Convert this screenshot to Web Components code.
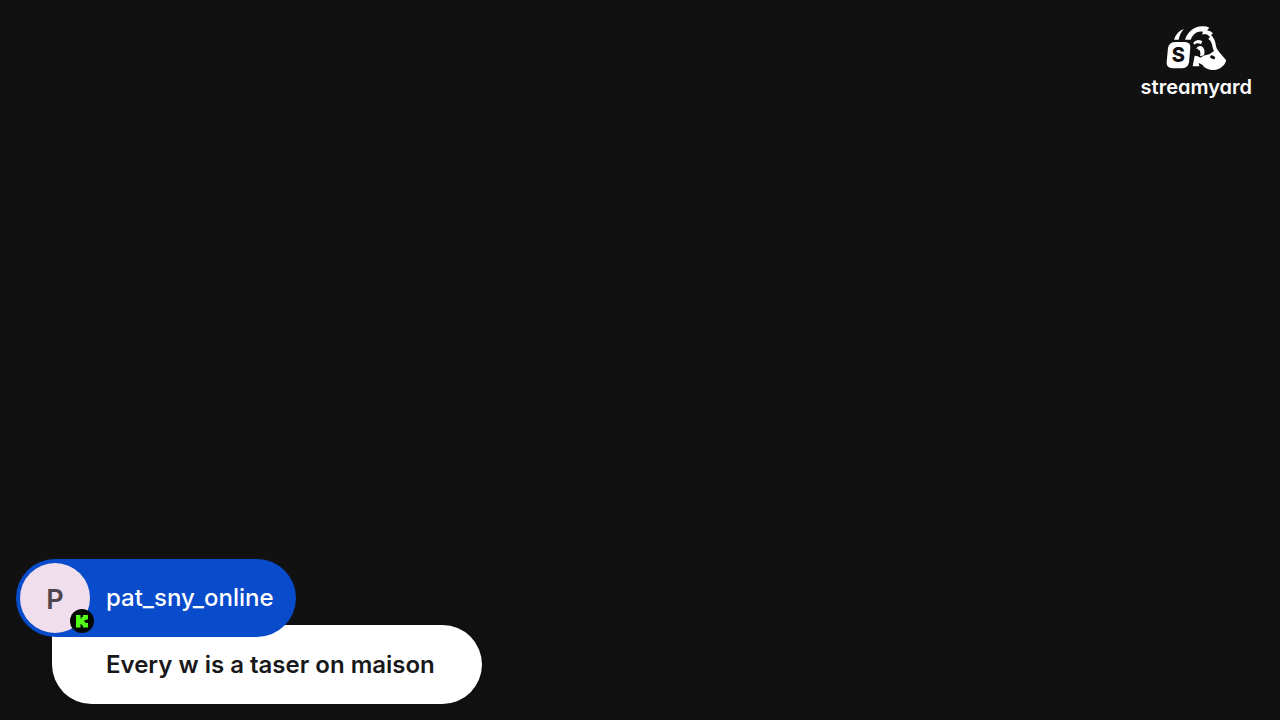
<!DOCTYPE html>
<html lang="en">
<head>
<meta charset="utf-8">
<meta name="viewport" content="width=device-width, initial-scale=1">
<title>StreamYard broadcast</title>
<style>
  html, body { margin: 0; height: 100%; background: #111111; }
  body { font-family: Inter, "Liberation Sans", sans-serif; }
</style>
</head>
<body>
<broadcast-stage>
  <brand-mark slot="brand">streamyard</brand-mark>
  <chat-comment slot="comment">
    <user-avatar slot="avatar">P</user-avatar>
    <span slot="author">pat_sny_online</span>
    Every w is a taser on maison
  </chat-comment>
</broadcast-stage>
<script>
  const define = (name, markup) => {
    const template = document.createElement('template');
    template.innerHTML = markup;
    customElements.define(name, class extends HTMLElement {
      constructor() {
        super();
        this.attachShadow({ mode: 'open' }).append(template.content.cloneNode(true));
      }
    });
  };

  define('broadcast-stage', `
    <style>
      :host { display: flex; flex-direction: column; justify-content: space-between;
        min-height: 100vh; box-sizing: border-box; padding: 25px 28px 16px 16px; background: #111111; }
      header { display: flex; justify-content: flex-end; }
    </style>
    <header><slot name="brand"></slot></header>
    <main><slot name="comment"></slot></main>`);

  define('brand-mark', `
    <style>
      :host { display: flex; flex-direction: column; align-items: center; color: #ffffff;
        font-size: 20px; line-height: 34px; font-weight: 600; font-feature-settings: "cv11"; }
      svg { display: block; width: 60px; height: 45px; }
    </style>
    <svg viewBox="108 30 180 135" aria-hidden="true">
      <g fill="#fff">
        <path d="M132 74C137 58 147 47 162 42C153 51 149 61 146 74Z"/>
        <path d="M165 74C173 50 192 35 216 34Q228 33 238 38L231 46Q242 47 249 55L243 60Q256 72 258 94Q260 104 268 112L289 136C285 150 272 164 252 165C237 165 224 160 217 149L206 144L208 154H188L194 122Q204 122 211 128Q221 120 238 118L252 108Q247 98 246 88Q244 77 235 72L240 65L230 58L216 58L219 50C201 47 189 57 182 74Z"/>
        <path d="M190 83Q201 70 217 79L213 88Q202 81 192 89Z"/>
        <path d="M198 101Q204 90 215 94Q227 101 222 121L210 124Q213 110 208 105Q203 107 205 101Z"/>
        <path d="M134 81H165Q182 82 181 98L177 142Q174 159 157 160H127Q109 159 110 142L114 99Q117 82 134 81Z"/>
      </g>
      <ellipse cx="248" cy="127" rx="8" ry="5" transform="rotate(25 248 127)" fill="#111"/>
      <text x="145" y="142" text-anchor="middle" font-family="Inter, sans-serif" font-size="60" font-weight="800" fill="#111">S</text>
    </svg>
    <slot></slot>`);

  define('user-avatar', `
    <style>
      :host { display: flex; position: relative; align-items: center; justify-content: center;
        box-sizing: border-box; width: 70px; height: 70px; padding-top: 3px; border-radius: 50%;
        background: #f1deed; color: #4d464c;
        font-size: 27px; line-height: 32px; font-weight: 600; }
      svg { position: absolute; right: -4px; bottom: 0; width: 24px; height: 24px; }
    </style>
    <slot></slot>
    <svg viewBox="0 0 24 24" role="img" aria-label="Kick">
      <circle cx="12" cy="12" r="12" fill="#050905"/>
      <g fill="#53fc18">
        <rect x="6" y="6" width="4.5" height="12.5"/>
        <rect x="10" y="9.5" width="2" height="5.5"/>
        <rect x="11.5" y="8" width="3" height="8.5"/>
        <rect x="13" y="6" width="5" height="4.5"/>
        <rect x="14" y="10" width="2" height="1"/>
        <rect x="14" y="13.5" width="2" height="1"/>
        <rect x="13" y="14" width="5" height="4.5"/>
      </g>
    </svg>`);

  define('chat-comment', `
    <style>
      :host { display: grid; justify-items: start; }
      .author { position: relative; z-index: 1; display: flex; align-items: center; gap: 16px;
        padding: 4px 22px 4px 4px; border-radius: 40px; background: #094ccb; color: #ffffff;
        font-size: 24px; line-height: 32px; font-weight: 500; }
      .message { margin: -12px 0 0 36px; padding: 24px 47px 23px 54px; border-radius: 40px;
        border-top-left-radius: 0; background: #ffffff; color: #18181a;
        font-size: 24px; line-height: 32px; font-weight: 600; box-shadow: 0 2px 8px #00000033; }
    </style>
    <div class="author"><slot name="avatar"></slot><slot name="author"></slot></div>
    <p class="message"><slot></slot></p>`);
</script>
</body>
</html>
